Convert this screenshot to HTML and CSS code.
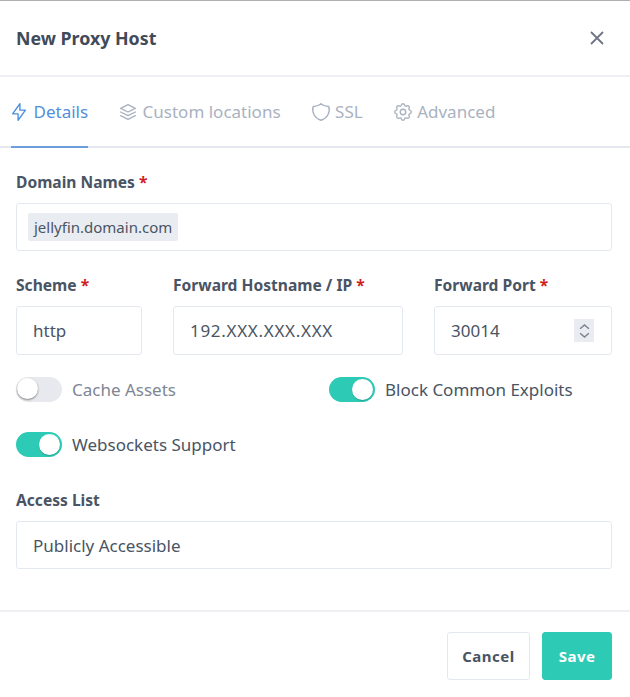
FILE: index.html
```html
<!DOCTYPE html>
<html>
  <head>
    <meta charset="utf-8" />
    <title>New Proxy Host</title>
    <link rel="stylesheet" href="styles.css">
  </head>
  <body>
    <div class="modal">
      <div class="modal-header">
        <h5 class="modal-title">New Proxy Host</h5>
        <svg class="close" viewBox="0 0 14 14"><path d="M1 1l12 12M13 1L1 13" /></svg>
      </div>
      <div class="tabs">
        <a class="tab active">
          <svg class="icon" viewBox="0 0 24 24"><path d="M13 3v7h6l-8 11v-7H5z" /></svg>
          Details
        </a>
        <a class="tab">
          <svg class="icon" viewBox="0 0 24 24"><path d="M12 4L4 8l8 4 8-4zM4 12l8 4 8-4M4 16l8 4 8-4" /></svg>
          Custom locations
        </a>
        <a class="tab">
          <svg class="icon" viewBox="0 0 24 24"><path d="M12 3a12 12 0 0 0 8.500 3A12 12 0 0 1 12 21 12 12 0 0 1 3.500 6 12 12 0 0 0 12 3" /></svg>
          SSL
        </a>
        <a class="tab">
          <svg class="icon" viewBox="0 0 24 24"><path d="M10.300 4.300c.4-1.800 3-1.800 3.400 0a1.700 1.700 0 0 0 2.600 1.100c1.500-.9 3.300.8 2.400 2.400a1.700 1.700 0 0 0 1 2.500c1.800.4 1.800 3 0 3.400a1.700 1.700 0 0 0-1 2.600c.9 1.500-.9 3.300-2.400 2.400a1.700 1.700 0 0 0-2.600 1c-.4 1.800-3 1.800-3.400 0a1.700 1.700 0 0 0-2.600-1c-1.500.9-3.300-.9-2.400-2.400a1.700 1.700 0 0 0-1-2.600c-1.800-.4-1.800-3 0-3.400a1.700 1.700 0 0 0 1-2.500c-.9-1.600.9-3.300 2.400-2.400a1.700 1.700 0 0 0 2.600-1.100z" /><circle cx="12" cy="12" r="3" /></svg>
          Advanced
        </a>
      </div>
      <div class="modal-body">
        <div class="field">
          <label>Domain Names <span class="req">*</span></label>
          <div class="input"><span class="tag">jellyfin.domain.com</span></div>
        </div>
        <div class="row">
          <div class="field scheme">
            <label>Scheme <span class="req">*</span></label>
            <div class="input">http</div>
          </div>
          <div class="field hostname">
            <label>Forward Hostname / IP <span class="req">*</span></label>
            <div class="input spaced">192.XXX.XXX.XXX</div>
          </div>
          <div class="field port">
            <label>Forward Port <span class="req">*</span></label>
            <div class="input">
              30014
              <span class="spinner">
                <svg viewBox="0 0 10 14"><path d="M1 5l4-3.500 4 3.500M1 9l4 3.500 4-3.500" /></svg>
              </span>
            </div>
          </div>
        </div>
        <div class="switches">
          <div class="switch-row">
            <div class="switch-item">
              <span class="switch"></span>
              <span class="switch-label muted">Cache Assets</span>
            </div>
            <div class="switch-item">
              <span class="switch on"></span>
              <span class="switch-label">Block Common Exploits</span>
            </div>
          </div>
          <div class="switch-item">
            <span class="switch on"></span>
            <span class="switch-label">Websockets Support</span>
          </div>
        </div>
        <div class="field">
          <label>Access List</label>
          <div class="input">Publicly Accessible</div>
        </div>
      </div>
      <div class="modal-footer">
        <button class="btn">Cancel</button>
        <button class="btn primary">Save</button>
      </div>
    </div>
  </body>
</html>
```

FILE: styles.css
```css
html,
body {
  margin: 0;
  padding: 0;
  background: #fff;
}

body {
  font-family: "Noto Sans", "Open Sans", sans-serif;
  font-size: 17px;
  color: #495464;
}

.modal {
  width: 630px;
  height: 697px;
  border-top: 1px solid #b0b0b0;
  box-sizing: border-box;
  overflow: hidden;
}

.modal-header {
  display: flex;
  justify-content: space-between;
  align-items: center;
  height: 74px;
  padding: 0 26px 0 16px;
  border-bottom: 2px solid #eef0f4;
}

.modal-title {
  margin: 0;
  font-size: 17.800px;
  font-weight: 700;
  color: #3f4a5a;
}

.close {
  width: 14px;
  height: 14px;
  fill: none;
  stroke: #6e7480;
  stroke-width: 1.800;
}

.tabs {
  display: flex;
  height: 69px;
  padding-left: 11px;
  border-bottom: 2px solid #e6e8ef;
}

.tab {
  display: flex;
  align-items: center;
  gap: 4.500px;
  margin-right: 32px;
  margin-bottom: -2px;
  color: #a9b2c0;
  border-bottom: 2px solid transparent;
  white-space: nowrap;
}

.tab.active {
  color: #4f8fdc;
  border-bottom-color: #6b9edd;
}

.icon {
  width: 22px;
  height: 22px;
  margin: 0 -1px 0 -3px;
  fill: none;
  stroke: currentColor;
  stroke-width: 1.500;
  stroke-linecap: round;
  stroke-linejoin: round;
}

.modal-body {
  padding: 24px 18px 0 16px;
}

.field label {
  display: block;
  margin-bottom: 10px;
  font-size: 15.600px;
  line-height: 21px;
  font-weight: 700;
  color: #495464;
}

.req {
  color: #d21c1c;
}

.input {
  display: flex;
  align-items: center;
  height: 48px;
  padding: 0 16px;
  border: 1px solid #e4e9f1;
  border-radius: 3px;
  box-sizing: border-box;
  color: #495464;
}

.spaced {
  letter-spacing: .7px;
}

.field .input:has(.tag) {
  padding-left: 11px;
}

.tag {
  height: 28px;
  padding: 0 6px;
  background: #e9ecf0;
  border-radius: 2px;
  font-size: 15px;
  line-height: 28px;
}

.row {
  display: flex;
  gap: 31px;
  margin-top: 24px;
}

.row .input {
  height: 49px;
}

.scheme {
  width: 126px;
}

.hostname {
  width: 230px;
}

.port {
  flex: 1;
}

.port .input {
  justify-content: space-between;
  padding-right: 17px;
}

.spinner {
  display: flex;
  align-items: center;
  justify-content: center;
  width: 20px;
  height: 23px;
  background: #e9ecf0;
}

.spinner svg {
  width: 11px;
  height: 16px;
  fill: none;
  stroke: #7b828e;
  stroke-width: 1.300;
}

.switches {
  display: flex;
  flex-direction: column;
  gap: 30px;
  margin-top: 22px;
  margin-bottom: 33px;
}

.switch-row {
  display: flex;
}

.switch-row .switch-item {
  flex: none;
  width: 313px;
}

.switch-item {
  display: flex;
  align-items: center;
  gap: 10px;
}

.switch {
  position: relative;
  display: block;
  width: 46px;
  height: 25px;
  border-radius: 13px;
  background: #e7e9ee;
  flex: none;
}

.switch::before {
  content: "";
  position: absolute;
  left: 1px;
  top: 1px;
  width: 21px;
  height: 21px;
  background: #fff;
  border-radius: 50%;
  box-shadow: 0 1px 2px rgba(0, 0, 0, .45);
}

.switch.on {
  background: #2dcab5;
}

.switch.on::before {
  left: auto;
  right: 2px;
  top: 2px;
  box-shadow: 0 1px 1px rgba(0, 0, 0, .2);
}

.switch-label {
  line-height: 25px;
}

.muted {
  color: #7d8694;
}

.modal-footer {
  display: flex;
  justify-content: flex-end;
  gap: 12px;
  margin-top: 41px;
  padding: 20px 18px 0 0;
  border-top: 2px solid #eef0f4;
}

.btn {
  height: 48px;
  padding: 0 14.500px;
  border: 1px solid #e4e9f1;
  border-radius: 3px;
  background: #fff;
  font-family: inherit;
  font-size: 15px;
  font-weight: 700;
  letter-spacing: .5px;
  color: #495464;
}

.btn.primary {
  padding: 0 15.500px;
  background: #2dcab5;
  border-color: #2dcab5;
  color: #fff;
}
```
